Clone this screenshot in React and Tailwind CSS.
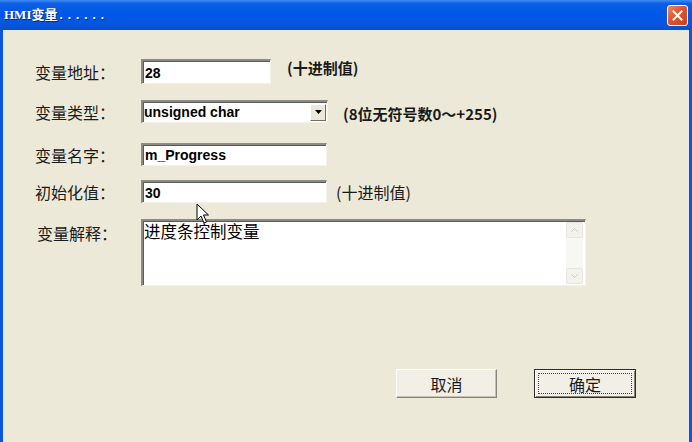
import React from "react";

// Win XP style "HMI变量" dialog
const LABEL = "text-[16px] text-[#1a1a1a] leading-none";
const VALUE = "font-['Liberation_Sans','Noto_Sans_CJK_SC',sans-serif] font-bold text-[14px] text-black";
const SUNKEN =
  "bg-white border-t-2 border-l-2 border-b border-r border-t-[#8b8a83] border-l-[#8b8a83] border-b-[#f4f2ea] border-r-[#f4f2ea] shadow-[inset_1px_1px_0_#5b5b55]";

function Field({ label, h, children, note, mt = "" }) {
  return (
    <div className={`flex items-center ${h} ${mt}`}>
      <div className={`w-[106px] ${LABEL}`}>{label}</div>
      {children}
      {note}
    </div>
  );
}

function Cursor() {
  return (
    <svg className="absolute left-[196px] top-[203px]" width="14" height="22" viewBox="0 0 14 22">
      <path d="M1 1 L1 17 L5 13 L8 20 L10.5 19 L7.5 12 L12.5 12 Z" fill="#fff" stroke="#000" strokeWidth="1" />
    </svg>
  );
}

export default function App() {
  return (
    <div className="relative w-[692px] h-[442px] flex flex-col overflow-hidden font-['Noto_Sans_CJK_SC',sans-serif] select-none">
      {/* title bar */}
      <div className="h-[30px] flex items-center justify-between pl-[4px] pr-[4px] bg-[linear-gradient(180deg,#3d8cf5_0%,#0b5fe4_12%,#0058e8_45%,#0556de_80%,#0a4ed0_100%)]">
        <span className="text-white font-bold text-[13px] [text-shadow:1px_1px_0_#0a2a7a] font-['Liberation_Serif','Noto_Sans_CJK_SC',serif]">
          HMI变量<span className="tracking-[5px] ml-[2px]">......</span>
        </span>
        <div className="w-[21px] h-[21px] rounded-[3px] border border-white bg-[linear-gradient(135deg,#f08a6a_0%,#e0542c_45%,#c7401c_100%)] flex items-center justify-center">
          <svg width="11" height="11" viewBox="0 0 11 11">
            <path d="M1.5 1.5 L9.5 9.5 M9.5 1.5 L1.5 9.5" stroke="#fff" strokeWidth="2" strokeLinecap="square" />
          </svg>
        </div>
      </div>

      {/* body */}
      <div className="flex-1 bg-[#ece9d8] border-l-[3px] border-r-[3px] border-l-[#0b56d9] border-r-[#0b56d9] pl-[32px] pt-[29px] flex flex-col">
        <Field
          label="变量地址："
          h="h-[25px]"
          note={<span className="ml-[16px] -mt-[6px] text-[15px] text-[#1a1a1a] font-bold">(十进制值)</span>}
        >
          <div className={`w-[130px] h-[25px] ${SUNKEN} flex items-center pl-[2px] pt-[2px] ${VALUE}`}>28</div>
        </Field>

        <Field
          label="变量类型："
          h="h-[23px]"
          mt="mt-[16px]"
          note={<span className="ml-[15px] mt-[6px] text-[15px] font-bold text-[#1a1a1a]">(8位无符号数0～+255)</span>}
        >
          <div className={`w-[187px] h-[23px] ${SUNKEN} flex items-center justify-between pl-[1px] pr-[1px]`}>
            <span className={VALUE}>unsigned char</span>
            <div className="w-[16px] h-[17px] bg-[#ece9d8] border border-t-white border-l-white border-b-[#716f64] border-r-[#716f64] flex items-center justify-center">
              <svg width="7" height="4" viewBox="0 0 7 4"><path d="M0 0 H7 L3.5 4 Z" fill="#000" /></svg>
            </div>
          </div>
        </Field>

        <Field label="变量名字：" h="h-[23px]" mt="mt-[20px]">
          <div className={`w-[186px] h-[23px] ${SUNKEN} flex items-center pl-[2px] ${VALUE}`}>m_Progress</div>
        </Field>

        <Field
          label="初始化值："
          h="h-[23px]"
          mt="mt-[14px]"
          note={<span className="ml-[9px] text-[16px] text-[#1a1a1a]">(十进制值)</span>}
        >
          <div className={`w-[186px] h-[23px] ${SUNKEN} flex items-center pl-[2px] pt-[2px] ${VALUE}`}>30</div>
        </Field>

        <div className="flex items-start h-[67px] mt-[16px]">
          <div className={`w-[106px] pl-[2px] pt-[6px] ${LABEL}`}>变量解释：</div>
          <div className={`w-[445px] h-[67px] ${SUNKEN} flex`}>
            <div className="flex-1 text-[16.5px] leading-[18px] text-black pl-[1px] pt-[1px]">进度条控制变量</div>
            <div className="w-[17px] mr-[2px] my-[1px] bg-[#f7f7f3] flex flex-col justify-between">
              <div className="h-[16px] rounded-[2px] border border-[#e8e6df] bg-[#f3f2ec] flex items-center justify-center">
                <svg width="7" height="4" viewBox="0 0 7 4"><path d="M0.5 3.5 L3.5 0.5 L6.5 3.5" stroke="#c9c7be" fill="none" /></svg>
              </div>
              <div className="h-[16px] rounded-[2px] border border-[#e8e6df] bg-[#f3f2ec] flex items-center justify-center">
                <svg width="7" height="4" viewBox="0 0 7 4"><path d="M0.5 0.5 L3.5 3.5 L6.5 0.5" stroke="#c9c7be" fill="none" /></svg>
              </div>
            </div>
          </div>
        </div>

        <div className="flex mt-[83px] pl-[361px] gap-[37px]">
          <button className="w-[101px] h-[29px] bg-[#f1efe6] border border-t-white border-l-white border-b-[#86847a] border-r-[#86847a] shadow-[inset_-1px_-1px_0_#c5c2b2] text-[16px] text-[#1a1a1a] flex items-center justify-center">
            取消
          </button>
          <button className="w-[102px] h-[29px] bg-[#f1efe6] border border-[#2c2c2a] shadow-[inset_1px_1px_0_#fff,inset_-1px_-1px_0_#86847a] p-[3px] flex">
            <span className="flex-1 border border-dotted border-[#444] flex items-center justify-center text-[16px] text-[#1a1a1a]">
              确定
            </span>
          </button>
        </div>
      </div>

      <Cursor />
    </div>
  );
}
